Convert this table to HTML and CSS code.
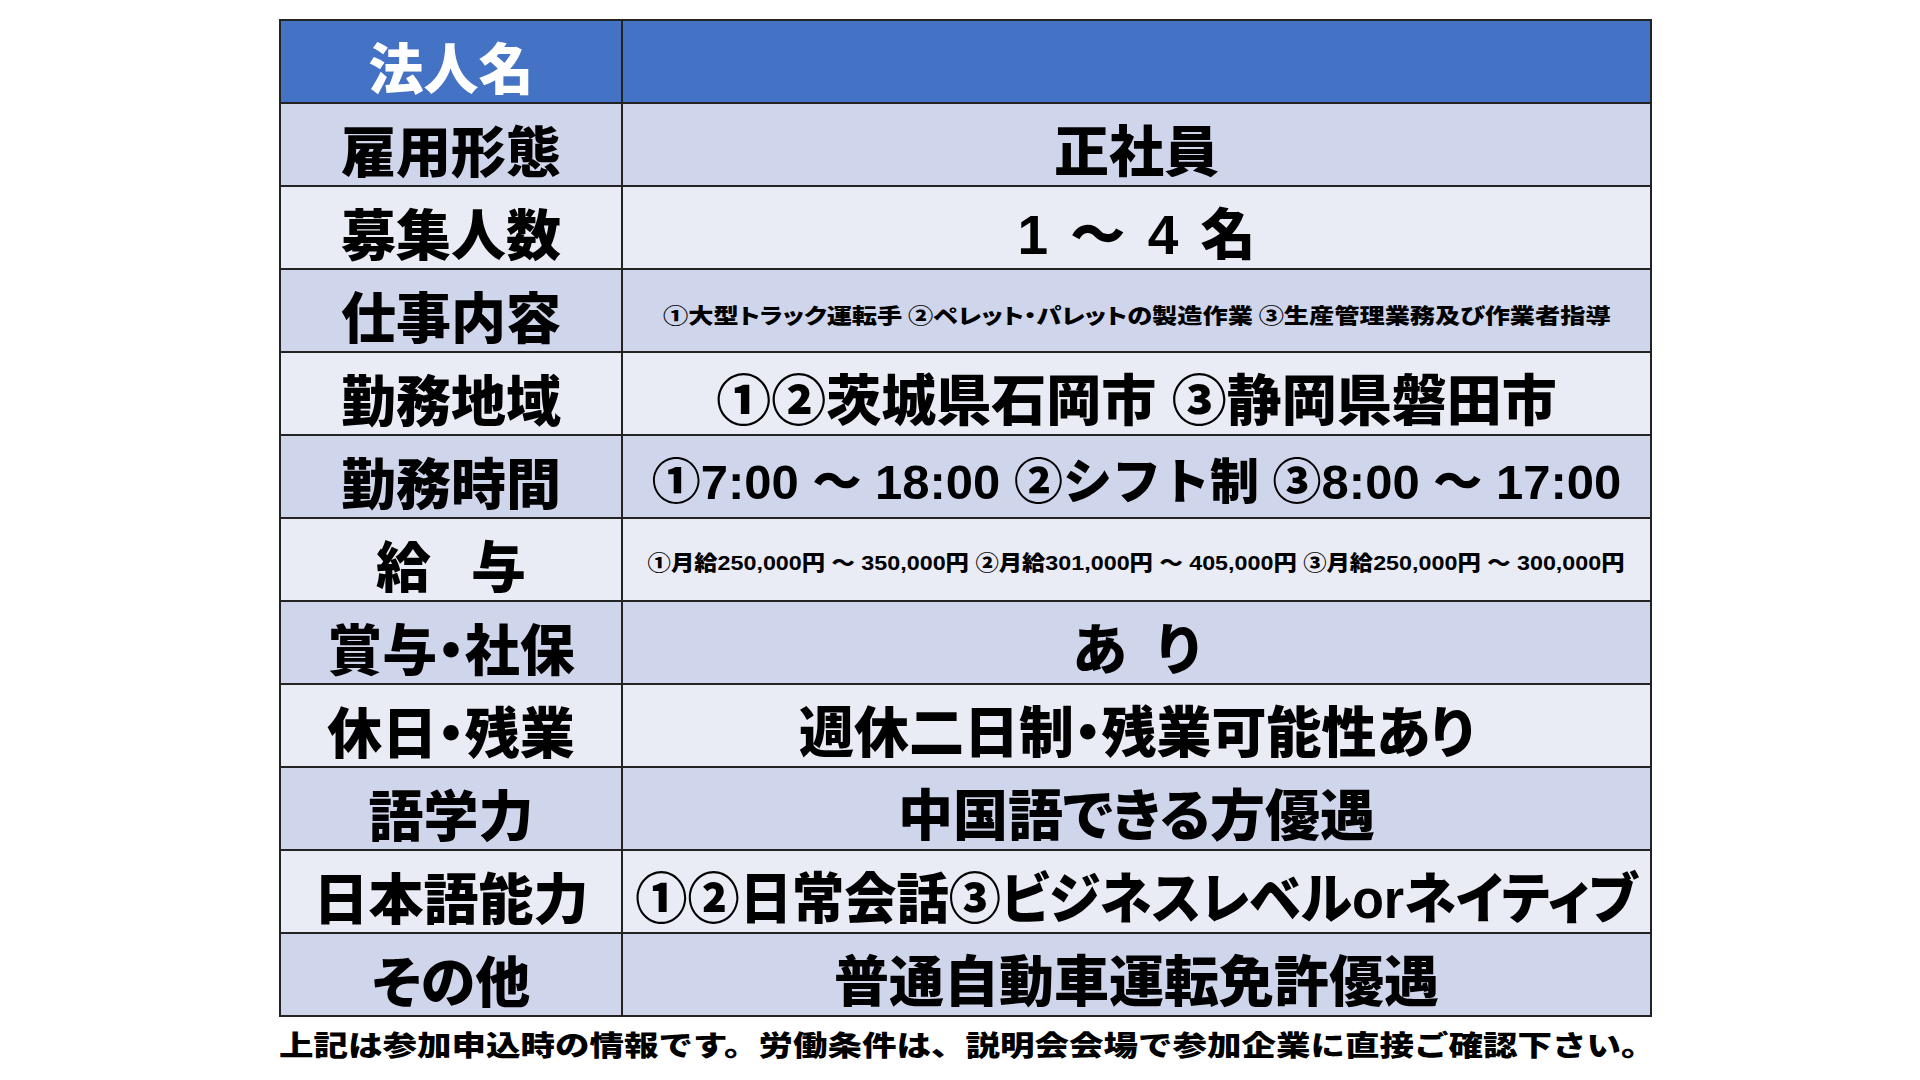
FILE: index.html
```html
<!DOCTYPE html>
<html lang="ja">
<head>
<meta charset="utf-8">
<title>求人情報</title>
<link rel="stylesheet" href="styles.css">
</head>
<body>
<div class="sheet">
  <div class="table">
    <div class="cell head label">法人名</div>
    <div class="cell head value"></div>

    <div class="cell dark label">雇用形態</div>
    <div class="cell dark value">正社員</div>

    <div class="cell light label">募集人数</div>
    <div class="cell light value count">1 ～ 4 名</div>

    <div class="cell dark label">仕事内容</div>
    <div class="cell dark value small"><span class="fit fit-job">①大型トラック運転手 ②ペレット・パレットの製造作業 ③生産管理業務及び作業者指導</span></div>

    <div class="cell light label">勤務地域</div>
    <div class="cell light value">①②茨城県石岡市 ③静岡県磐田市</div>

    <div class="cell dark label">勤務時間</div>
    <div class="cell dark value time">①7:00 ～ 18:00 ②シフト制 ③8:00 ～ 17:00</div>

    <div class="cell light label"><span class="spread-label">給</span>与</div>
    <div class="cell light value small"><span class="fit fit-pay">①月給250,000円 ～ 350,000円 ②月給301,000円 ～ 405,000円 ③月給250,000円 ～ 300,000円</span></div>

    <div class="cell dark label">賞与・社保</div>
    <div class="cell dark value"><span class="spread-value">あ</span>り</div>

    <div class="cell light label">休日・残業</div>
    <div class="cell light value">週休二日制・残業可能性あり</div>

    <div class="cell dark label">語学力</div>
    <div class="cell dark value">中国語できる方優遇</div>

    <div class="cell light label">日本語能力</div>
    <div class="cell light value"><span class="fit fit-lang">①②日常会話③ビジネスレベルorネイティブ</span></div>

    <div class="cell dark label">その他</div>
    <div class="cell dark value">普通自動車運転免許優遇</div>
  </div>
  <p class="note"><span class="note-text">上記は参加申込時の情報です。労働条件は、説明会会場で参加企業に直接ご確認下さい。</span></p>
</div>
</body>
</html>
```
FILE: styles.css
```css
html, body {
  margin: 0;
  padding: 0;
  background: #ffffff;
}

body {
  width: 1920px;
  height: 1080px;
  overflow: hidden;
  font-family: "Noto Sans CJK JP", sans-serif;
  color: #000000;
}

.sheet {
  padding: 19px 0 0 279px;
}

.table {
  width: 1373px;
  height: 998px;
  box-sizing: border-box;
  display: grid;
  grid-template-columns: 340px 1027px;
  grid-template-rows: repeat(12, 1fr);
  gap: 2px;
  padding: 2px;
  background: #232323;
}

.cell {
  display: flex;
  align-items: center;
  justify-content: center;
  white-space: nowrap;
  font-weight: 900;
  font-feature-settings: "palt" 1;
  min-width: 0;
}

.head {
  background: #4472c4;
  color: #ffffff;
}

.dark {
  background: #cfd5ea;
}

.light {
  background: #e9ebf5;
}

.label {
  font-size: 55px;
  line-height: 66px;
  padding-top: 6px;
}

.value {
  font-family: "Liberation Sans", "Noto Sans CJK JP", sans-serif;
  font-size: 55px;
  line-height: 66px;
  padding-top: 14px;
}

.count {
  word-spacing: 7px;
}

.time {
  font-size: 49px;
  font-feature-settings: normal;
  padding-top: 10px;
}

.small {
  font-size: 21px;
  line-height: 26px;
  padding-top: 6px;
}

.fit {
  display: inline-block;
  transform-origin: center center;
}

.fit-job {
  font-family: "Noto Sans CJK JP", sans-serif;
  transform: scaleX(1.2);
}

.fit-pay {
  transform: scaleX(1.11);
}

.fit-lang {
  transform: scaleX(0.95);
}

.spread-label {
  margin-right: 40px;
}

.spread-value {
  margin-right: 30px;
}

.note {
  margin: 12px 0 0 0;
  font-size: 28px;
  line-height: 30px;
  font-weight: 900;
  white-space: nowrap;
}

.note-text {
  display: inline-block;
  transform: scaleX(1.232);
  transform-origin: left center;
}
```
